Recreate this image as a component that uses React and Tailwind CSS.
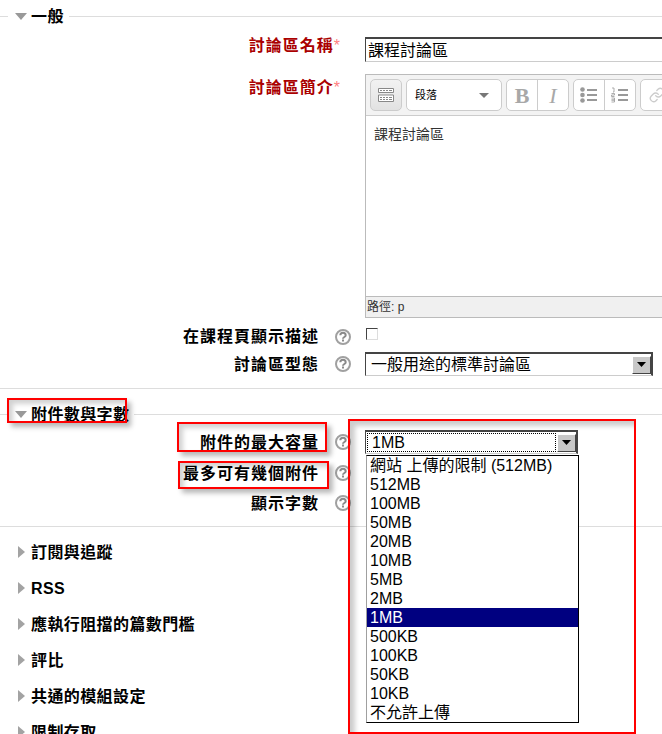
import React from "react";
import { Link } from "lucide-react";

const Help = () => (
  <svg width="16" height="16" viewBox="0 0 16 16" className="shrink-0">
    <circle cx="8" cy="8" r="7" fill="#fff" stroke="#a0a0a0" strokeWidth="2" />
    <path d="M5.300 6.300c0-3.500 5.400-3.500 5.400 0 0 1.800-2.700 1.600-2.700 3.400" fill="none" stroke="#8a8a8a" strokeWidth="2" />
    <rect x="7" y="10.500" width="2" height="2" fill="#8a8a8a" />
  </svg>
);

const ArrowDown = () => (
  <svg width="12" height="7" viewBox="0 0 12 7" className="shrink-0"><path d="M0 0h12L6 7z" fill="#999" /></svg>
);
const ArrowRight = () => (
  <svg width="7" height="12" viewBox="0 0 7 12" className="shrink-0"><path d="M0 0l7 6-7 6z" fill="#a3a3a3" /></svg>
);

const Legend = ({ children }) => (
  <div className="flex items-center h-8">
    <div className="w-2 h-px bg-[#dddddd]" />
    <div className="ml-[7px] flex items-center gap-1 pr-[5px] font-bold text-base text-black tracking-[0.4px]">
      <ArrowDown />
      <span className="pt-[2px]">{children}</span>
    </div>
    <div className="flex-1 h-px bg-[#dddddd]" />
  </div>
);

const Row = ({ label, help, children, className = "", labelClass = "" }) => (
  <div className={"flex items-center h-6 " + className}>
    <div className={"w-[319px] shrink-0 text-right font-bold text-base tracking-[1px] leading-6 text-black whitespace-nowrap " + labelClass}>{label}</div>
    <div className="ml-4 w-4 shrink-0">{help && <Help />}</div>
    <div className="ml-[14px] flex-1 min-w-0">{children}</div>
  </div>
);

const ReqRow = ({ label, children, className = "", labelClass = "" }) => (
  <div className={"flex " + className}>
    <div className={"w-[340px] shrink-0 text-right font-bold text-base tracking-[1px] leading-6 text-[#aa0000] whitespace-nowrap " + labelClass}>
      {label}<span className="text-[#ff8080] font-normal tracking-normal">*</span>
    </div>
    <div className="ml-[25px] w-[300px] shrink-0">{children}</div>
  </div>
);

const SelectBtn = () => (
  <div className="w-[19px] h-[18px] bg-[#c8c8c8] border-t border-l border-t-white border-l-white border-r border-b border-r-[#444] border-b-[#444] flex items-center justify-center shrink-0">
    <svg width="9" height="5" viewBox="0 0 9 5"><path d="M0 0h9L4.500 5z" fill="#000" /></svg>
  </div>
);

const Collapsed = ({ children }) => (
  <div className="flex items-center h-9 pl-[18px] gap-[6px] font-bold text-base tracking-[0.4px] text-black">
    <ArrowRight />
    <span className="pt-[2px]">{children}</span>
  </div>
);

const ToolGroup = ({ children, className = "" }) => (
  <div className={"flex h-8 border border-[#cccccc] rounded-[5px] bg-white shrink-0 " + className}>{children}</div>
);

const Bars = () => (
  <svg width="18" height="16" viewBox="0 0 18 16">
    <circle cx="2.500" cy="2.500" r="2.300" fill="#999" /><circle cx="2.500" cy="8" r="2.300" fill="#999" /><circle cx="2.500" cy="13.500" r="2.300" fill="#999" />
    <path d="M7 2h10v2H7zM7 7h10v2H7zM7 12h10v2H7z" fill="#999" />
  </svg>
);
const NumBars = () => (
  <svg width="18" height="16" viewBox="0 0 18 16">
    <path d="M1 1h2v4H2M0.500 6.500h3v1.500h-3v1.500h3M0.500 11h3v2h-3h3v2h-3" fill="none" stroke="#999" strokeWidth="0.8" />
    <path d="M7 2h10v2H7zM7 7h10v2H7zM7 12h10v2H7z" fill="#999" />
  </svg>
);
const KbIcon = () => (
  <svg width="16" height="16" viewBox="0 0 16 16">
    <path d="M0.500 1.500h15v4h-15zM0.500 8h15v6.500h-15z" fill="#fff" stroke="#888" />
    <path d="M2 3h2v1H2zM5 3h2v1H5zM8 3h2v1H8zM11 3h3v1h-3zM2 10h2v1H2zM5 10h2v1H5zM8 10h2v1H8zM11 10h3v1h-3zM2 12h2v1H2zM5 12h2v1H5zM8 12h2v1H8zM11 12h3v1h-3z" fill="#888" />
  </svg>
);

const options = ["網站 上傳的限制 (512MB)", "512MB", "100MB", "50MB", "20MB", "10MB", "5MB", "2MB", "1MB", "500KB", "100KB", "50KB", "10KB", "不允許上傳"];

const redShadow = "shadow-[4px_4px_5px_rgba(0,0,0,0.28),inset_4px_4px_5px_rgba(0,0,0,0.18)]";

export default function App() {
  return (
    <div className="relative w-[662px] h-[734px] overflow-hidden bg-white text-black font-['Liberation_Sans','Noto_Sans_CJK_TC',sans-serif]">
      <Legend>一般</Legend>

      <ReqRow label="討論區名稱" className="mt-[5px]" labelClass="-mt-[3px]">
        <div className="h-[25px] border-t-2 border-l border-t-[#444] border-l-[#444] border-b border-b-[#cccccc] pl-[2px] text-base leading-6 whitespace-nowrap">課程討論區</div>
      </ReqRow>

      <ReqRow label="討論區簡介" className="mt-3 h-[244px]" labelClass="pt-[2px]">
        <div className="h-[244px] border border-[#bbbbbb] flex flex-col">
          <div className="h-[41px] bg-[#f3f3f3] border-b border-[#cccccc] flex items-center gap-1 pl-1 shrink-0">
            <ToolGroup className="w-8 items-center justify-center bg-gradient-to-b from-[#f2f2f2] to-[#e2e2e2]"><KbIcon /></ToolGroup>
            <ToolGroup className="w-[96px] items-center pl-2 pr-3 justify-between">
              <span className="text-[11px] text-black">段落</span>
              <svg width="10" height="5" viewBox="0 0 10 5"><path d="M0 0h10L5 5z" fill="#777" /></svg>
            </ToolGroup>
            <ToolGroup className="w-[63px]">
              <div className="w-[31px] border-r border-[#cccccc] flex items-center justify-center font-['Liberation_Serif',serif] font-bold text-[22px] text-[#a8a8a8]">B</div>
              <div className="flex-1 flex items-center justify-center font-['Liberation_Serif',serif] italic text-[22px] text-[#a8a8a8]">I</div>
            </ToolGroup>
            <ToolGroup className="w-[63px]">
              <div className="w-[31px] border-r border-[#cccccc] flex items-center justify-center"><Bars /></div>
              <div className="flex-1 flex items-center justify-center"><NumBars /></div>
            </ToolGroup>
            <ToolGroup className="w-[40px] items-center pl-2"><Link size={16} color="#cccccc" /></ToolGroup>
          </div>
          <div className="flex-1 px-2 pt-2 text-sm leading-5 text-[#333]">課程討論區</div>
          <div className="h-[21px] shrink-0 bg-[#f0f0f0] border-t border-[#bbbbbb] pl-px text-xs leading-5 text-[#333]">路徑: p</div>
        </div>
      </ReqRow>

      <Row label="在課程頁顯示描述" help className="mt-[7px]">
        <div className="w-3 h-3 border-t border-l border-t-[#444] border-l-[#444] border-r border-b border-r-[#ddd] border-b-[#ddd] -mt-[6px] ml-px" />
      </Row>
      <Row label="討論區型態" help className="mt-[3px]" labelClass="pt-px">
        <div className="w-[288px] h-6 border-t-2 border-l border-r-2 border-t-[#444] border-l-[#444] border-r-[#444] border-b border-b-[#cccccc] flex items-center justify-between pl-[5px] text-base whitespace-nowrap">
          <span className="leading-5 pt-px">一般用途的標準討論區</span>
          <SelectBtn />
        </div>
      </Row>
      <div className="h-px bg-[#dddddd] mt-3" />

      <div className="mt-[9px]"><Legend>附件數與字數</Legend></div>

      <Row label="附件的最大容量" help labelClass="pt-[2px]">
        <div className="w-[213px] h-6 border-t-2 border-l border-r-2 border-t-[#444] border-l-[#444] border-r-[#444] border-b border-b-[#cccccc] flex items-center justify-between text-base">
          <span className="flex-1 mx-px h-[19px] border border-dotted border-black pl-1 leading-[17px]">1MB</span>
          <SelectBtn />
        </div>
      </Row>
      <Row label="最多可有幾個附件" help className="mt-[7px]" labelClass="pt-px" />
      <Row label="顯示字數" help className="mt-1.5" labelClass="pt-px" />

      <div className="h-px bg-[#dddddd] mt-[11px]" />

      <div className="mt-[7px]">
        <Collapsed>訂閱與追蹤</Collapsed>
        <Collapsed>RSS</Collapsed>
        <Collapsed>應執行阻擋的篇數門檻</Collapsed>
        <Collapsed>評比</Collapsed>
        <Collapsed>共通的模組設定</Collapsed>
        <Collapsed>限制存取</Collapsed>
      </div>

      {/* open dropdown list */}
      <div className="absolute left-[366px] top-[455px] w-[213px] border border-black border-l-[#a0a0a0] bg-white text-base text-black">
        {options.map((o) => (
          <div key={o} className={"h-[19px] leading-[19px] pl-[3px] whitespace-nowrap " + (o === "1MB" ? "bg-[#000080] text-white" : "")}>{o}</div>
        ))}
      </div>

      {/* annotation boxes */}
      <div className={"absolute left-[7px] top-[398px] w-[120px] h-[25px] border-2 border-[#ff0000] " + redShadow} />
      <div className={"absolute left-[177px] top-[422px] w-[150px] h-[30px] border-2 border-[#ff0000] " + redShadow} />
      <div className={"absolute left-[178px] top-[461px] w-[151px] h-[28px] border-2 border-[#ff0000] " + redShadow} />
      <div className="absolute left-[348px] top-[419px] w-[288px] h-[315px] border-2 border-[#ff0000] shadow-[inset_5px_5px_5px_rgba(0,0,0,0.2)]" />
    </div>
  );
}
